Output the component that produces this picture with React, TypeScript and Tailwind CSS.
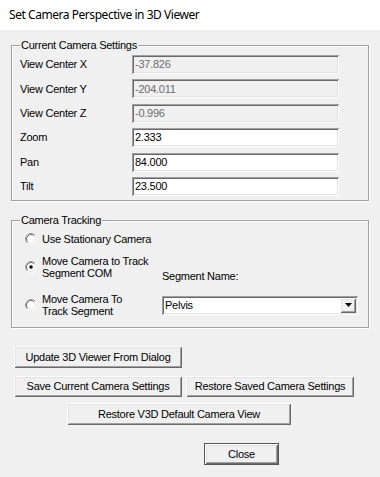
import React from "react";

const sunken =
  "shadow-[inset_1px_1px_0_#a0a0a0,inset_-1px_-1px_0_#fff,inset_2px_2px_0_#696969,inset_-2px_-2px_0_#e3e3e3]";
const raised =
  "shadow-[inset_1px_1px_0_#fff,inset_-1px_-1px_0_#696969,inset_2px_2px_0_#e3e3e3,inset_-2px_-2px_0_#a0a0a0]";

const fields = [
  { label: "View Center X", value: "-37.826", disabled: true },
  { label: "View Center Y", value: "-204.011", disabled: true },
  { label: "View Center Z", value: "-0.996", disabled: true },
  { label: "Zoom", value: "2.333", disabled: false },
  { label: "Pan", value: "84.000", disabled: false },
  { label: "Tilt", value: "23.500", disabled: false },
];

const Radio = ({ checked }: { checked?: boolean }) => (
  <svg width="12" height="12" viewBox="0 0 12 12" className="shrink-0">
    <circle cx="6" cy="6" r="5" fill="#fff" />
    <path d="M2.11 9.89 A5.5 5.5 0 0 1 9.89 2.11" fill="none" stroke="#a0a0a0" />
    <path d="M9.89 2.11 A5.5 5.5 0 0 1 2.11 9.89" fill="none" stroke="#fff" />
    <path d="M2.82 9.18 A4.5 4.5 0 0 1 9.18 2.82" fill="none" stroke="#696969" />
    <path d="M9.18 2.82 A4.5 4.5 0 0 1 2.82 9.18" fill="none" stroke="#e3e3e3" />
    {checked && <circle cx="6" cy="6" r="1.8" fill="#000" />}
  </svg>
);

const GroupBox = ({
  title,
  className,
  children,
}: {
  title: string;
  className?: string;
  children: React.ReactNode;
}) => (
  <div
    className={`relative border border-[#a0a0a0] shadow-[inset_1px_1px_0_#fff,1px_1px_0_#fff] ${className ?? ""}`}
  >
    <span className="absolute left-[8px] top-[-7px] bg-[#f0f0f0] px-[1px] leading-[13px]">
      {title}
    </span>
    {children}
  </div>
);

const Button = ({
  children,
  className,
}: {
  children: React.ReactNode;
  className?: string;
}) => (
  <button
    className={`flex items-center justify-center bg-[#f0f0f0] text-black ${raised} ${className ?? ""}`}
  >
    {children}
  </button>
);

export default function App() {
  return (
    <div className="w-[380px] h-[477px] bg-[#f0f0f0] text-[11px] tracking-[-0.25px] text-black font-['Liberation_Sans',Arial,sans-serif] overflow-hidden">
      {/* title bar */}
      <div className="h-[30px] bg-white pl-[9px] flex items-center text-[12px] tracking-[-0.45px] font-['Noto_Sans',sans-serif]">
        Set Camera Perspective in 3D Viewer
      </div>

      <div className="px-[11px]">
        <GroupBox title="Current Camera Settings" className="mt-[15px] h-[156px]">
          <div className="flex flex-col gap-[5.4px] pt-[9px] pl-[8px]">
            {fields.map((f) => (
              <div key={f.label} className="flex items-center">
                <span className="w-[112px] shrink-0">{f.label}</span>
                <div
                  className={`w-[207px] h-[19px] flex items-center px-[3px] ${sunken} ${
                    f.disabled ? "bg-[#f0f0f0] text-[#6d6d6d]" : "bg-white text-black"
                  }`}
                >
                  {f.value}
                </div>
              </div>
            ))}
          </div>
        </GroupBox>

        <GroupBox title="Camera Tracking" className="mt-[19px] h-[108px]">
          <div className="flex flex-col pt-[10px] pl-[13px] leading-[12px]">
            <div className="flex items-center h-[16px]">
              <Radio />
              <span className="ml-[5px]">Use Stationary Camera</span>
            </div>
            <div className="flex items-start mt-[8px]">
              <div className="w-[137px] shrink-0 flex items-center h-[24px]">
                <Radio checked />
                <span className="ml-[5px]">
                  Move Camera to Track
                  <br />
                  Segment COM
                </span>
              </div>
              <span className="pt-[15px]">Segment Name:</span>
            </div>
            <div className="flex items-center mt-[11px]">
              <div className="w-[137px] shrink-0 flex items-center h-[24px]">
                <Radio />
                <span className="ml-[5px]">
                  Move Camera To
                  <br />
                  Track Segment
                </span>
              </div>
              <div
                className={`w-[196px] h-[19px] bg-white flex items-center justify-between pl-[3px] pr-[2px] ${sunken}`}
              >
                <span>Pelvis</span>
                <div className={`w-[16px] h-[15px] flex items-center justify-center bg-[#f0f0f0] ${raised}`}>
                  <svg width="7" height="4" viewBox="0 0 7 4">
                    <path d="M0 0 H7 L3.5 4 Z" fill="#000" />
                  </svg>
                </div>
              </div>
            </div>
          </div>
        </GroupBox>
      </div>

      <div className="flex flex-col mt-[18px]">
        <Button className="ml-[14px] w-[168px] h-[22px]">Update 3D Viewer From Dialog</Button>
        <div className="flex gap-[4px] ml-[14px] mt-[8px]">
          <Button className="w-[168px] h-[21px]">Save Current Camera Settings</Button>
          <Button className="w-[168px] h-[21px]">Restore Saved Camera Settings</Button>
        </div>
        <Button className="ml-[67px] mt-[6px] w-[224px] h-[22px]">Restore V3D Default Camera View</Button>
        <Button className="ml-[204px] mt-[18px] w-[75px] h-[22px] border border-[#555]">Close</Button>
      </div>
    </div>
  );
}
